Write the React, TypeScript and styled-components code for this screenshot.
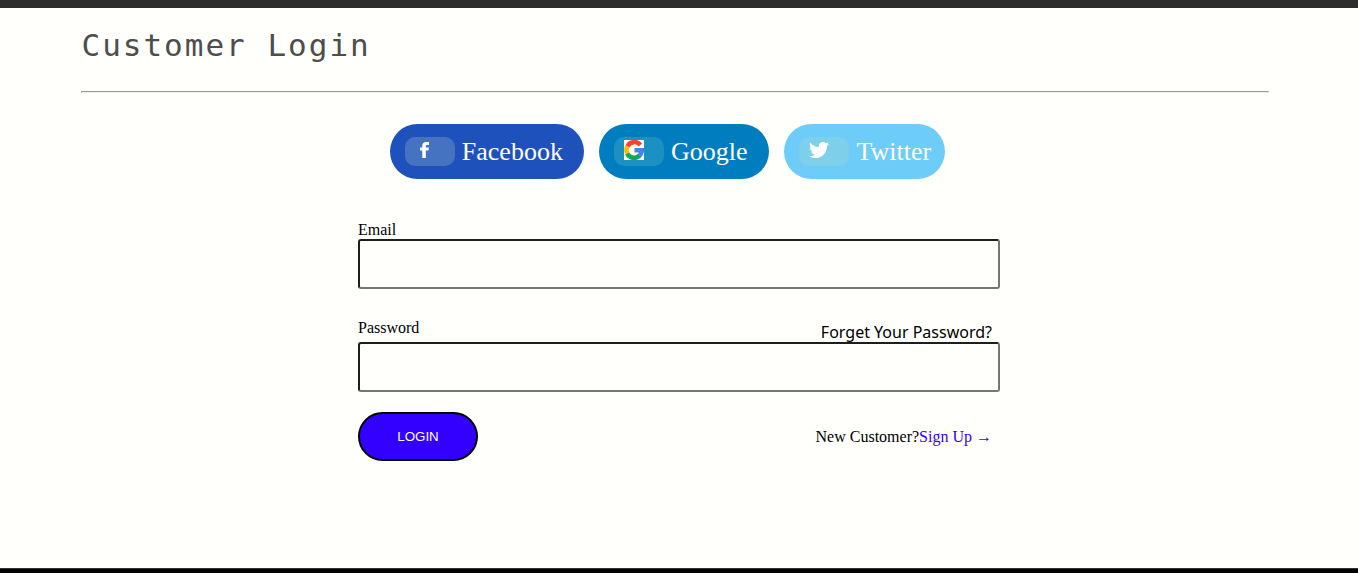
import React from 'react';
import styled, { createGlobalStyle } from 'styled-components';
import { FaTwitter } from 'react-icons/fa';

const GlobalStyle = createGlobalStyle`
  * { box-sizing: border-box; }
  body {
    margin: 0;
    background: #fffffc;
    color: #000;
    font-family: "Liberation Serif", "Times New Roman", serif;
    font-size: 16px;
    line-height: 18px;
  }
`;

const TopBar = styled.header`
  height: 8px;
  background: #2d2d2d;
`;

const Main = styled.main`
  padding-bottom: 107px;
`;

const Intro = styled.section`
  margin-right: 8px;
  padding: 16px 6% 0;
`;

const Title = styled.h1`
  margin: 0;
  color: #4d4d4d;
  font-family: Consolas, "DejaVu Sans Mono", monospace;
  font-size: 31px;
  font-weight: 400;
  letter-spacing: 2px;
  line-height: 42px;
`;

const Divider = styled.hr`
  margin: 25px 0 31px;
  border: 1px solid;
  border-color: #999 #eee #eee #999;
`;

const SocialList = styled.div`
  display: flex;
  flex-wrap: wrap;
  justify-content: center;
  gap: 15px;
  padding-right: 15px;
`;

const SocialButton = styled.button<{ $color: string; $end: number }>`
  display: flex;
  align-items: center;
  gap: 7px;
  height: 55px;
  padding: 0 ${(p) => p.$end}px 0 15px;
  border: 0;
  border-radius: 28px;
  background: ${(p) => p.$color};
  color: #fff;
  font-family: inherit;
  font-size: 26px;
  line-height: 30px;
  cursor: pointer;
`;

const IconBadge = styled.span<{ $color: string }>`
  display: flex;
  align-items: center;
  width: 50px;
  height: 29px;
  padding: 0 10px 4px;
  border-radius: 10px;
  background: ${(p) => p.$color};
`;

const Form = styled.form`
  width: 100%;
  max-width: 642px;
  margin: 42px auto 0;
`;

const Field = styled.div`
  margin-bottom: 30px;
`;

const PasswordField = styled.div`
  margin-bottom: 20px;
`;

const LabelRow = styled.div`
  display: flex;
  justify-content: space-between;
  height: 23px;
  padding-right: 8px;
`;

const Label = styled.label`
  display: block;
`;

const Input = styled.input`
  display: block;
  width: 100%;
  height: 50px;
  padding: 0 12px;
  border: 2px solid;
  border-color: #1e1e1e #767676 #767676 #1e1e1e;
  border-radius: 3px;
  background: transparent;
  font-size: 16px;
`;

const ForgetLink = styled.a`
  color: #000;
  font-family: "Comic Sans MS", "Noto Sans", sans-serif;
  line-height: 26px;
  text-decoration: none;
`;

const Actions = styled.div`
  display: flex;
  align-items: center;
  justify-content: space-between;
  padding-right: 8px;
`;

const LoginButton = styled.button`
  width: 120px;
  height: 49px;
  border: 2px solid #000;
  border-radius: 25px;
  background: #30f;
  color: #fff;
  font-family: "Liberation Sans", Arial, sans-serif;
  cursor: pointer;
`;

const SignUpText = styled.p`
  margin: 0;
`;

const SignUpLink = styled.a`
  color: #30f;
  text-decoration: none;
`;

const BottomBar = styled.footer`
  height: 5px;
  border-top: 1px solid #333;
  background: #000;
`;

const FacebookMark = () => (
  <svg width="20" height="20" viewBox="0 0 20 20" aria-hidden="true">
    <path
      fill="#fff"
      d="M7.3 18V10.4H5V7.4H7.3V5.6C7.3 3.2 8.7 2 11 2H14V4.9H12.3C11.2 4.9 10.8 5.3 10.8 6.2V7.4H14L13.5 10.4H10.8V18Z"
    />
  </svg>
);

const GoogleMark = () => (
  <svg width="20" height="20" viewBox="0 0 20 20" aria-hidden="true">
    <rect width="20" height="20" fill="#fff" />
    <g fill="none" strokeWidth="4.6">
      <path d="M3.4 6.4A7.7 7.7 0 0 1 16.4 5" stroke="#f9432f" />
      <path d="M3.4 13.8A7.7 7.7 0 0 1 3.4 6.2" stroke="#fbbb08" />
      <path d="M15.8 15.4A7.7 7.7 0 0 1 3.3 13.6" stroke="#10a85a" />
      <path d="M10.5 10.2H17.8A7.7 7.7 0 0 1 15.4 15.7" stroke="#4384f5" />
    </g>
  </svg>
);

export default function App() {
  return (
    <>
      <GlobalStyle />
      <TopBar />
      <Main>
        <Intro>
          <Title>Customer Login</Title>
          <Divider />
          <SocialList>
            <SocialButton type="button" $color="#1f51bd" $end={21}>
              <IconBadge $color="#4573c1"><FacebookMark /></IconBadge>
              Facebook
            </SocialButton>
            <SocialButton type="button" $color="#007dbf" $end={22}>
              <IconBadge $color="#1a91c1"><GoogleMark /></IconBadge>
              Google
            </SocialButton>
            <SocialButton type="button" $color="#6ecdf8" $end={14}>
              <IconBadge $color="#7dcfea"><FaTwitter size={20} /></IconBadge>
              Twitter
            </SocialButton>
          </SocialList>
        </Intro>
        <Form onSubmit={(e) => e.preventDefault()}>
          <Field>
            <Label htmlFor="email">Email</Label>
            <Input id="email" type="email" />
          </Field>
          <PasswordField>
            <LabelRow>
              <Label htmlFor="password">Password</Label>
              <ForgetLink href="#forget">Forget Your Password?</ForgetLink>
            </LabelRow>
            <Input id="password" type="password" />
          </PasswordField>
          <Actions>
            <LoginButton type="submit">LOGIN</LoginButton>
            <SignUpText>
              New Customer?<SignUpLink href="#signup">Sign Up →</SignUpLink>
            </SignUpText>
          </Actions>
        </Form>
      </Main>
      <BottomBar />
    </>
  );
}
